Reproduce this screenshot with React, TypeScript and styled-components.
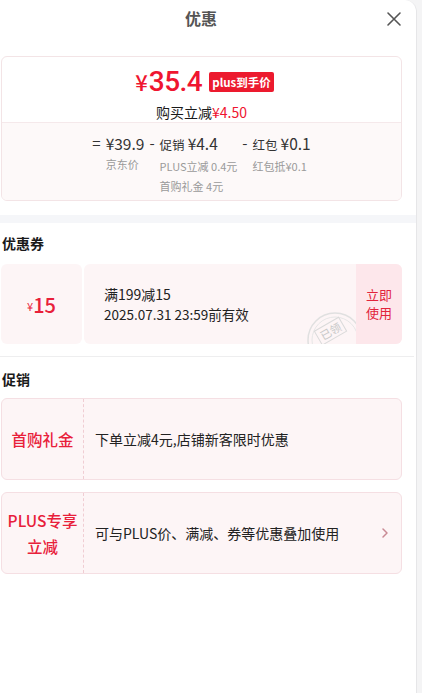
import React from 'react';
import styled, { createGlobalStyle } from 'styled-components';

const GlobalStyle = createGlobalStyle`
  body {
    margin: 0;
    background: #f4f4f5;
    font-family: "Noto Sans CJK SC", "Noto Sans", Roboto, sans-serif;
    color: #1a1a1a;
  }
`;

const Panel = styled.div`
  width: 417px;
  height: 693px;
  background: #fff;
  border-right: 1px solid #e6e6e8;
  border-top-right-radius: 12px;
  box-sizing: border-box;
  overflow: hidden;
`;

const Header = styled.header`
  position: relative;
  height: 36px;
  display: flex;
  align-items: center;
  justify-content: center;
`;

const Title = styled.h1`
  margin: 0;
  font-size: 16px;
  font-weight: 700;
  color: #555;
  margin-left: -14px;
`;

const Close = styled.button`
  position: absolute;
  right: 14px;
  top: 11px;
  width: 16px;
  height: 16px;
  padding: 0;
  border: none;
  background: transparent;
  display: flex;
`;

const Inner = styled.div`
  padding: 0 14px 0 1px;
`;

const PriceCard = styled.section`
  margin-top: 20px;
  border: 1px solid #f3e4e6;
  border-radius: 6px;
  overflow: hidden;
`;

const PriceTop = styled.div`
  height: 65px;
  display: flex;
  flex-direction: column;
  align-items: center;
  border-bottom: 1px solid #f5e9eb;
`;

const PriceLine = styled.div`
  display: flex;
  align-items: center;
  height: 44px;
  padding-top: 2px;
  padding-left: 6px;
  color: #ef1530;
`;

const Yen = styled.span<{ size: number }>`
  font-size: ${p => p.size}px;
  font-weight: 500;
  margin-right: 1px;
`;

const BigPrice = styled.span`
  font-size: 28px;
  font-weight: 500;
  letter-spacing: -0.5px;
  font-family: Roboto, "Noto Sans CJK SC", sans-serif;
`;

const Badge = styled.span`
  margin-left: 7px;
  background: #ec1a2e;
  color: #fff;
  font-size: 11.5px;
  font-weight: 700;
  padding: 0 3px;
  height: 20px;
  line-height: 20px;
  border-radius: 2px;
  margin-top: 2px;
`;

const Saving = styled.div`
  font-size: 14px;
  color: #1a1a1a;
  line-height: 18px;
  em {
    font-style: normal;
    color: #ef1530;
  }
`;

const Breakdown = styled.div`
  background: #fdf9f9;
  height: 77px;
  display: flex;
  justify-content: center;
  gap: 5px;
  padding-top: 9px;
  box-sizing: border-box;
`;

const Group = styled.div`
  display: flex;
  gap: 5px;
`;

const Op = styled.span`
  font-size: 15px;
  color: #333;
  line-height: 22px;
`;

const Block = styled.div`
  display: flex;
  flex-direction: column;
`;

const Main = styled.div`
  line-height: 22px;
  color: #333;
  font-size: 15.5px;
  white-space: nowrap;
  small {
    font-size: 12.5px;
    margin-right: 3px;
  }
`;

const Sub = styled.div`
  font-size: 11px;
  color: #9a9a9a;
  line-height: 20px;
  white-space: nowrap;
`;

const Band = styled.div`
  height: 8px;
  background: #f5f6f9;
  margin-top: 14px;
`;

const SectionTitle = styled.h2<{ top: number; bottom: number }>`
  margin: ${p => p.top}px 0 ${p => p.bottom}px;
  padding-left: 1px;
  font-size: 14px;
  font-weight: 700;
  line-height: 20px;
  color: #1a1a1a;
`;

const Coupon = styled.div`
  display: flex;
  gap: 2px;
  height: 80px;
`;

const CouponValue = styled.div`
  width: 81px;
  background: #fdf5f6;
  border-radius: 6px;
  display: flex;
  align-items: center;
  justify-content: center;
  color: #e8203a;
  span {
    font-size: 11px;
    margin-top: 3px;
  }
  b {
    font-size: 20px;
    font-weight: 500;
  }
`;

const CouponBody = styled.div`
  position: relative;
  flex: 1;
  display: flex;
  background: #fdf5f6;
  border-radius: 6px;
  overflow: hidden;
`;

const CouponInfo = styled.div`
  flex: 1;
  padding-left: 20px;
  display: flex;
  flex-direction: column;
  justify-content: center;
  font-size: 14px;
  color: #222;
  line-height: 20px;
  div + div {
    font-size: 13.5px;
  }
`;

const UseNow = styled.button`
  width: 46px;
  border: none;
  background: #fde7eb;
  color: #e2243c;
  font-family: inherit;
  font-size: 13px;
  line-height: 18px;
  padding: 0 8px;
  position: relative;
  z-index: 1;
`;

const Stamp = styled.svg`
  position: absolute;
  right: 37px;
  bottom: -26px;
`;

const Divider = styled.div`
  height: 1px;
  background: #eeeeef;
  margin: 12px -12px 0 -1px;
`;

const PromoList = styled.div`
  display: flex;
  flex-direction: column;
  gap: 12px;
`;

const Promo = styled.div`
  display: flex;
  height: 82px;
  border: 1px solid #f5dfe3;
  border-radius: 6px;
  background: #fdf5f6;
  box-sizing: border-box;
`;

const PromoLabel = styled.div`
  width: 81px;
  flex-shrink: 0;
  border-right: 1px dashed #f0cdd3;
  display: flex;
  align-items: center;
  justify-content: center;
  text-align: center;
  color: #e8203a;
  font-size: 15.5px;
  font-weight: 500;
  line-height: 26px;
`;

const PromoText = styled.div`
  flex: 1;
  display: flex;
  align-items: center;
  justify-content: space-between;
  padding: 0 12px 0 11px;
  font-size: 14px;
  color: #222;
`;

const App: React.FC = () => (
  <>
    <GlobalStyle />
    <Panel>
      <Header>
        <Title>优惠</Title>
        <Close aria-label="关闭">
          <svg width="16" height="16" viewBox="0 0 16 16">
            <path d="M2 2 L14 14 M14 2 L2 14" stroke="#555" strokeWidth="1.6" strokeLinecap="round" />
          </svg>
        </Close>
      </Header>
      <Inner>
        <PriceCard>
          <PriceTop>
            <PriceLine>
              <Yen size={22}>¥</Yen>
              <BigPrice>35.4</BigPrice>
              <Badge>plus到手价</Badge>
            </PriceLine>
            <Saving>购买立减<em>¥4.50</em></Saving>
          </PriceTop>
          <Breakdown>
            <Group>
              <Op>=</Op>
              <Block>
                <Main>¥39.9</Main>
                <Sub>京东价</Sub>
              </Block>
            </Group>
            <Group>
              <Op>-</Op>
              <Block>
                <Main><small>促销</small>¥4.4</Main>
                <Sub>PLUS立减 0.4元</Sub>
                <Sub>首购礼金 4元</Sub>
              </Block>
            </Group>
            <Group>
              <Op>-</Op>
              <Block>
                <Main><small>红包</small>¥0.1</Main>
                <Sub>红包抵¥0.1</Sub>
              </Block>
            </Group>
          </Breakdown>
        </PriceCard>
      </Inner>
      <Band />
      <Inner>
        <SectionTitle top={10} bottom={11}>优惠券</SectionTitle>
        <Coupon>
          <CouponValue>
            <span>¥</span>
            <b>15</b>
          </CouponValue>
          <CouponBody>
            <CouponInfo>
              <div>满199减15</div>
              <div>2025.07.31 23:59前有效</div>
            </CouponInfo>
            <Stamp width="60" height="60" viewBox="0 0 60 60">
              <circle cx="30" cy="30" r="27" fill="none" stroke="#e0e0e0" strokeWidth="1.5" />
              <circle cx="30" cy="30" r="23" fill="none" stroke="#e6e6e6" strokeWidth="1" />
              <g transform="rotate(-30 26 22)">
                <rect x="12" y="13" width="28" height="16" fill="none" stroke="#dadada" strokeWidth="1" />
                <text x="26" y="25.5" fontSize="11" fill="#c8c8c8" textAnchor="middle" fontFamily="Noto Sans CJK SC, sans-serif">已领</text>
              </g>
            </Stamp>
            <UseNow>立即使用</UseNow>
          </CouponBody>
        </Coupon>
        <Divider />
        <SectionTitle top={12} bottom={9}>促销</SectionTitle>
        <PromoList>
          <Promo>
            <PromoLabel>首购礼金</PromoLabel>
            <PromoText>下单立减4元,店铺新客限时优惠</PromoText>
          </Promo>
          <Promo>
            <PromoLabel>PLUS专享<br />立减</PromoLabel>
            <PromoText>
              可与PLUS价、满减、券等优惠叠加使用
              <svg width="8" height="12" viewBox="0 0 8 12">
                <path d="M2 2 L6 6 L2 10" fill="none" stroke="#c98a94" strokeWidth="1.5" strokeLinecap="round" strokeLinejoin="round" />
              </svg>
            </PromoText>
          </Promo>
        </PromoList>
      </Inner>
    </Panel>
  </>
);

export default App;
